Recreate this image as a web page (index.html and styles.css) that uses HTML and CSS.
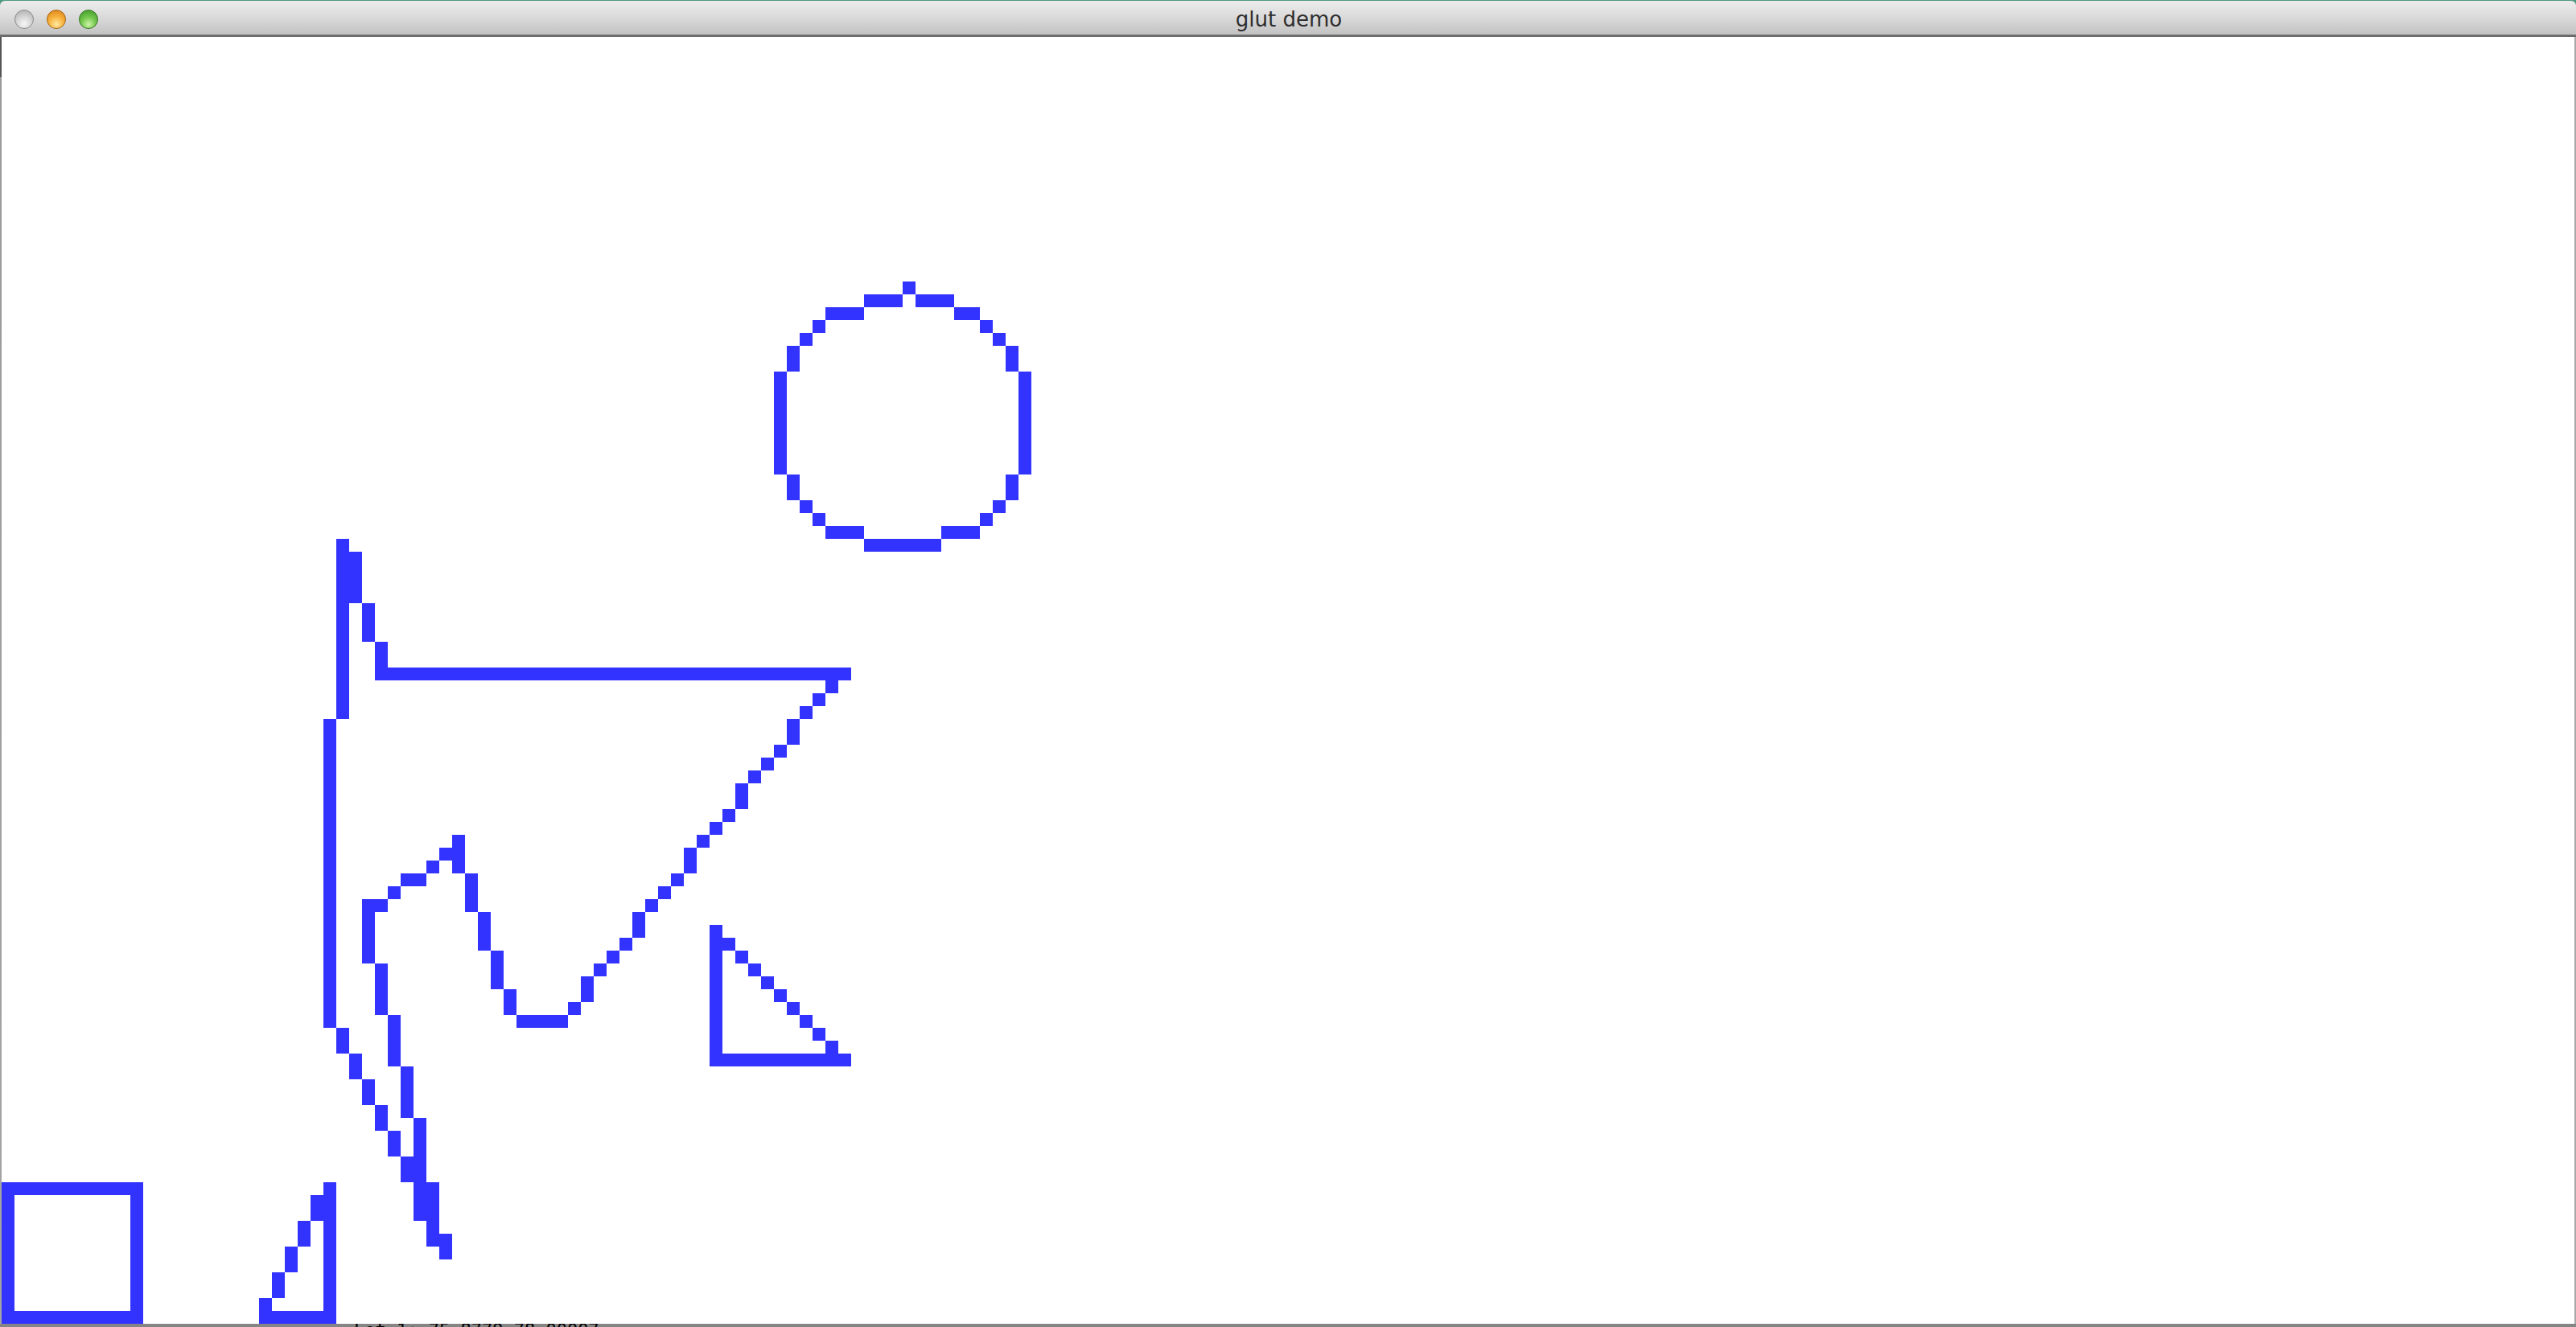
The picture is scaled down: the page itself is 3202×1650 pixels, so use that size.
FILE: index.html
```html
<!DOCTYPE html>
<html lang="en">
<head>
<meta charset="utf-8">
<title>glut demo</title>
<link rel="stylesheet" href="styles.css">
</head>
<body>
<div class="window">
  <header class="titlebar">
    <div class="lights">
      <span class="light light-close"></span>
      <span class="light light-min"></span>
      <span class="light light-max"></span>
    </div>
    <div class="title">glut demo</div>
  </header>
  <main class="content">
    <div class="edge-left"></div>
    <svg class="canvas" width="3198" height="1600" viewBox="0 0 3198 1600" shape-rendering="crispEdges">
      <g transform="scale(16)" fill="#3333ff">
        <!-- circle -->
        <rect x="70" y="19" width="1" height="1"/>
        <rect x="67" y="20" width="3" height="1"/><rect x="71" y="20" width="3" height="1"/>
        <rect x="64" y="21" width="3" height="1"/><rect x="74" y="21" width="2" height="1"/>
        <rect x="63" y="22" width="1" height="1"/><rect x="76" y="22" width="1" height="1"/>
        <rect x="62" y="23" width="1" height="1"/><rect x="77" y="23" width="1" height="1"/>
        <rect x="61" y="24" width="1" height="2"/><rect x="78" y="24" width="1" height="2"/>
        <rect x="60" y="26" width="1" height="8"/><rect x="79" y="26" width="1" height="8"/>
        <rect x="61" y="34" width="1" height="2"/><rect x="78" y="34" width="1" height="2"/>
        <rect x="62" y="36" width="1" height="1"/><rect x="77" y="36" width="1" height="1"/>
        <rect x="63" y="37" width="1" height="1"/><rect x="76" y="37" width="1" height="1"/>
        <rect x="64" y="38" width="3" height="1"/><rect x="73" y="38" width="3" height="1"/>
        <rect x="67" y="39" width="6" height="1"/>
        <!-- figure: upper part -->
        <rect x="26" y="39" width="1" height="14"/>
        <rect x="27" y="40" width="1" height="4"/>
        <rect x="28" y="44" width="1" height="3"/>
        <rect x="29" y="47" width="1" height="3"/>
        <rect x="29" y="49" width="37" height="1"/>
        <rect x="64" y="50" width="1" height="1"/>
        <rect x="63" y="51" width="1" height="1"/>
        <rect x="62" y="52" width="1" height="1"/>
        <rect x="61" y="53" width="1" height="2"/>
        <rect x="60" y="55" width="1" height="1"/>
        <rect x="59" y="56" width="1" height="1"/>
        <rect x="58" y="57" width="1" height="1"/>
        <rect x="57" y="58" width="1" height="2"/>
        <rect x="56" y="60" width="1" height="1"/>
        <rect x="55" y="61" width="1" height="1"/>
        <rect x="54" y="62" width="1" height="1"/>
        <rect x="53" y="63" width="1" height="2"/>
        <rect x="52" y="65" width="1" height="1"/>
        <rect x="51" y="66" width="1" height="1"/>
        <rect x="50" y="67" width="1" height="1"/>
        <rect x="49" y="68" width="1" height="2"/>
        <rect x="48" y="70" width="1" height="1"/>
        <rect x="47" y="71" width="1" height="1"/>
        <rect x="46" y="72" width="1" height="1"/>
        <rect x="45" y="73" width="1" height="2"/>
        <rect x="44" y="75" width="1" height="1"/>
        <rect x="40" y="76" width="4" height="1"/>
        <rect x="39" y="74" width="1" height="2"/>
        <rect x="38" y="71" width="1" height="3"/>
        <rect x="37" y="68" width="1" height="3"/>
        <rect x="36" y="65" width="1" height="3"/>
        <rect x="35" y="62" width="1" height="3"/>
        <rect x="34" y="63" width="1" height="1"/>
        <rect x="33" y="64" width="1" height="1"/>
        <rect x="31" y="65" width="2" height="1"/>
        <rect x="30" y="66" width="1" height="1"/>
        <rect x="28" y="67" width="2" height="1"/>
        <rect x="28" y="67" width="1" height="5"/>
        <rect x="29" y="72" width="1" height="4"/>
        <rect x="30" y="76" width="1" height="4"/>
        <rect x="31" y="80" width="1" height="4"/>
        <rect x="32" y="84" width="1" height="8"/>
        <rect x="33" y="89" width="1" height="5"/>
        <rect x="34" y="93" width="1" height="2"/>
        <!-- figure: outer leg -->
        <rect x="25" y="53" width="1" height="24"/>
        <rect x="26" y="77" width="1" height="2"/>
        <rect x="27" y="79" width="1" height="2"/>
        <rect x="28" y="81" width="1" height="2"/>
        <rect x="29" y="83" width="1" height="2"/>
        <rect x="30" y="85" width="1" height="2"/>
        <rect x="31" y="87" width="1" height="2"/>
        <!-- right triangle -->
        <rect x="55" y="69" width="1" height="11"/>
        <rect x="56" y="70" width="1" height="1"/>
        <rect x="57" y="71" width="1" height="1"/>
        <rect x="58" y="72" width="1" height="1"/>
        <rect x="59" y="73" width="1" height="1"/>
        <rect x="60" y="74" width="1" height="1"/>
        <rect x="61" y="75" width="1" height="1"/>
        <rect x="62" y="76" width="1" height="1"/>
        <rect x="63" y="77" width="1" height="1"/>
        <rect x="64" y="78" width="1" height="1"/>
        <rect x="55" y="79" width="11" height="1"/>
        <!-- square -->
        <rect x="0" y="89" width="11" height="1"/>
        <rect x="0" y="99" width="11" height="1"/>
        <rect x="0" y="89" width="1" height="11"/>
        <rect x="10" y="89" width="1" height="11"/>
        <!-- small triangle -->
        <rect x="25" y="89" width="1" height="11"/>
        <rect x="24" y="90" width="1" height="2"/>
        <rect x="23" y="92" width="1" height="2"/>
        <rect x="22" y="94" width="1" height="2"/>
        <rect x="21" y="96" width="1" height="2"/>
        <rect x="20" y="98" width="1" height="2"/>
        <rect x="20" y="99" width="6" height="1"/>
      </g>
    </svg>
    <div class="edge-right"></div>
  </main>
  <footer class="underlay">
    <span class="underlay-text">Lot 1: 75 8779 78 00007</span>
  </footer>
</div>
</body>
</html>
```

FILE: styles.css
```css
html, body {
  margin: 0;
  padding: 0;
}

body {
  width: 3202px;
  height: 1650px;
  overflow: hidden;
  background: #4d9a80;
  font-family: "DejaVu Sans", "Liberation Sans", sans-serif;
}

.window {
  display: flex;
  flex-direction: column;
  width: 3202px;
  height: 1649px;
  margin-top: 1px;
}

.titlebar {
  position: relative;
  flex: 0 0 auto;
  height: 42px;
  display: flex;
  align-items: center;
  justify-content: center;
  background: linear-gradient(#ececec, #dedede 40%, #c2c2c2);
  border-bottom: 3px solid #6c6c6c;
  border-radius: 6px 6px 0 0;
}

.lights {
  position: absolute;
  left: 18px;
  top: 11px;
  display: flex;
  gap: 16px;
}

.light {
  width: 24px;
  height: 24px;
  border-radius: 50%;
  box-sizing: border-box;
}

.light-close {
  background: radial-gradient(circle at 50% 75%, #f6f6f6 0%, #d6d6d6 45%, #a9a9a9 100%);
  border: 1px solid #8b8b8b;
}

.light-min {
  background: radial-gradient(circle at 50% 78%, #ffe9a0 0%, #f7b33e 45%, #d77d12 100%);
  border: 1px solid #a5620f;
}

.light-max {
  background: radial-gradient(circle at 50% 78%, #cdf5a8 0%, #72c64c 45%, #3d9426 100%);
  border: 1px solid #33751d;
}

.title {
  font-size: 26px;
  color: #2e2e2e;
  padding-top: 4px;
  padding-left: 2px;
}

.content {
  flex: 0 0 auto;
  display: flex;
  height: 1600px;
  background: #ffffff;
}

.edge-left {
  flex: 0 0 2px;
  background: linear-gradient(#555555 0px, #555555 50px, #9a9a9a 50px, #a5a5a5 100%);
}

.edge-right {
  flex: 0 0 2px;
  background: #a8a8a8;
}

.canvas {
  display: block;
  flex: 0 0 3198px;
  background: #ffffff;
}

.underlay {
  flex: 0 0 auto;
  height: 4px;
  overflow: hidden;
  background: #858585;
  padding-left: 440px;
}

.underlay-text {
  display: block;
  margin-top: -3px;
  font-family: "DejaVu Sans Mono", "Liberation Mono", monospace;
  font-size: 22px;
  line-height: 22px;
  color: #000000;
  white-space: pre;
}
```
